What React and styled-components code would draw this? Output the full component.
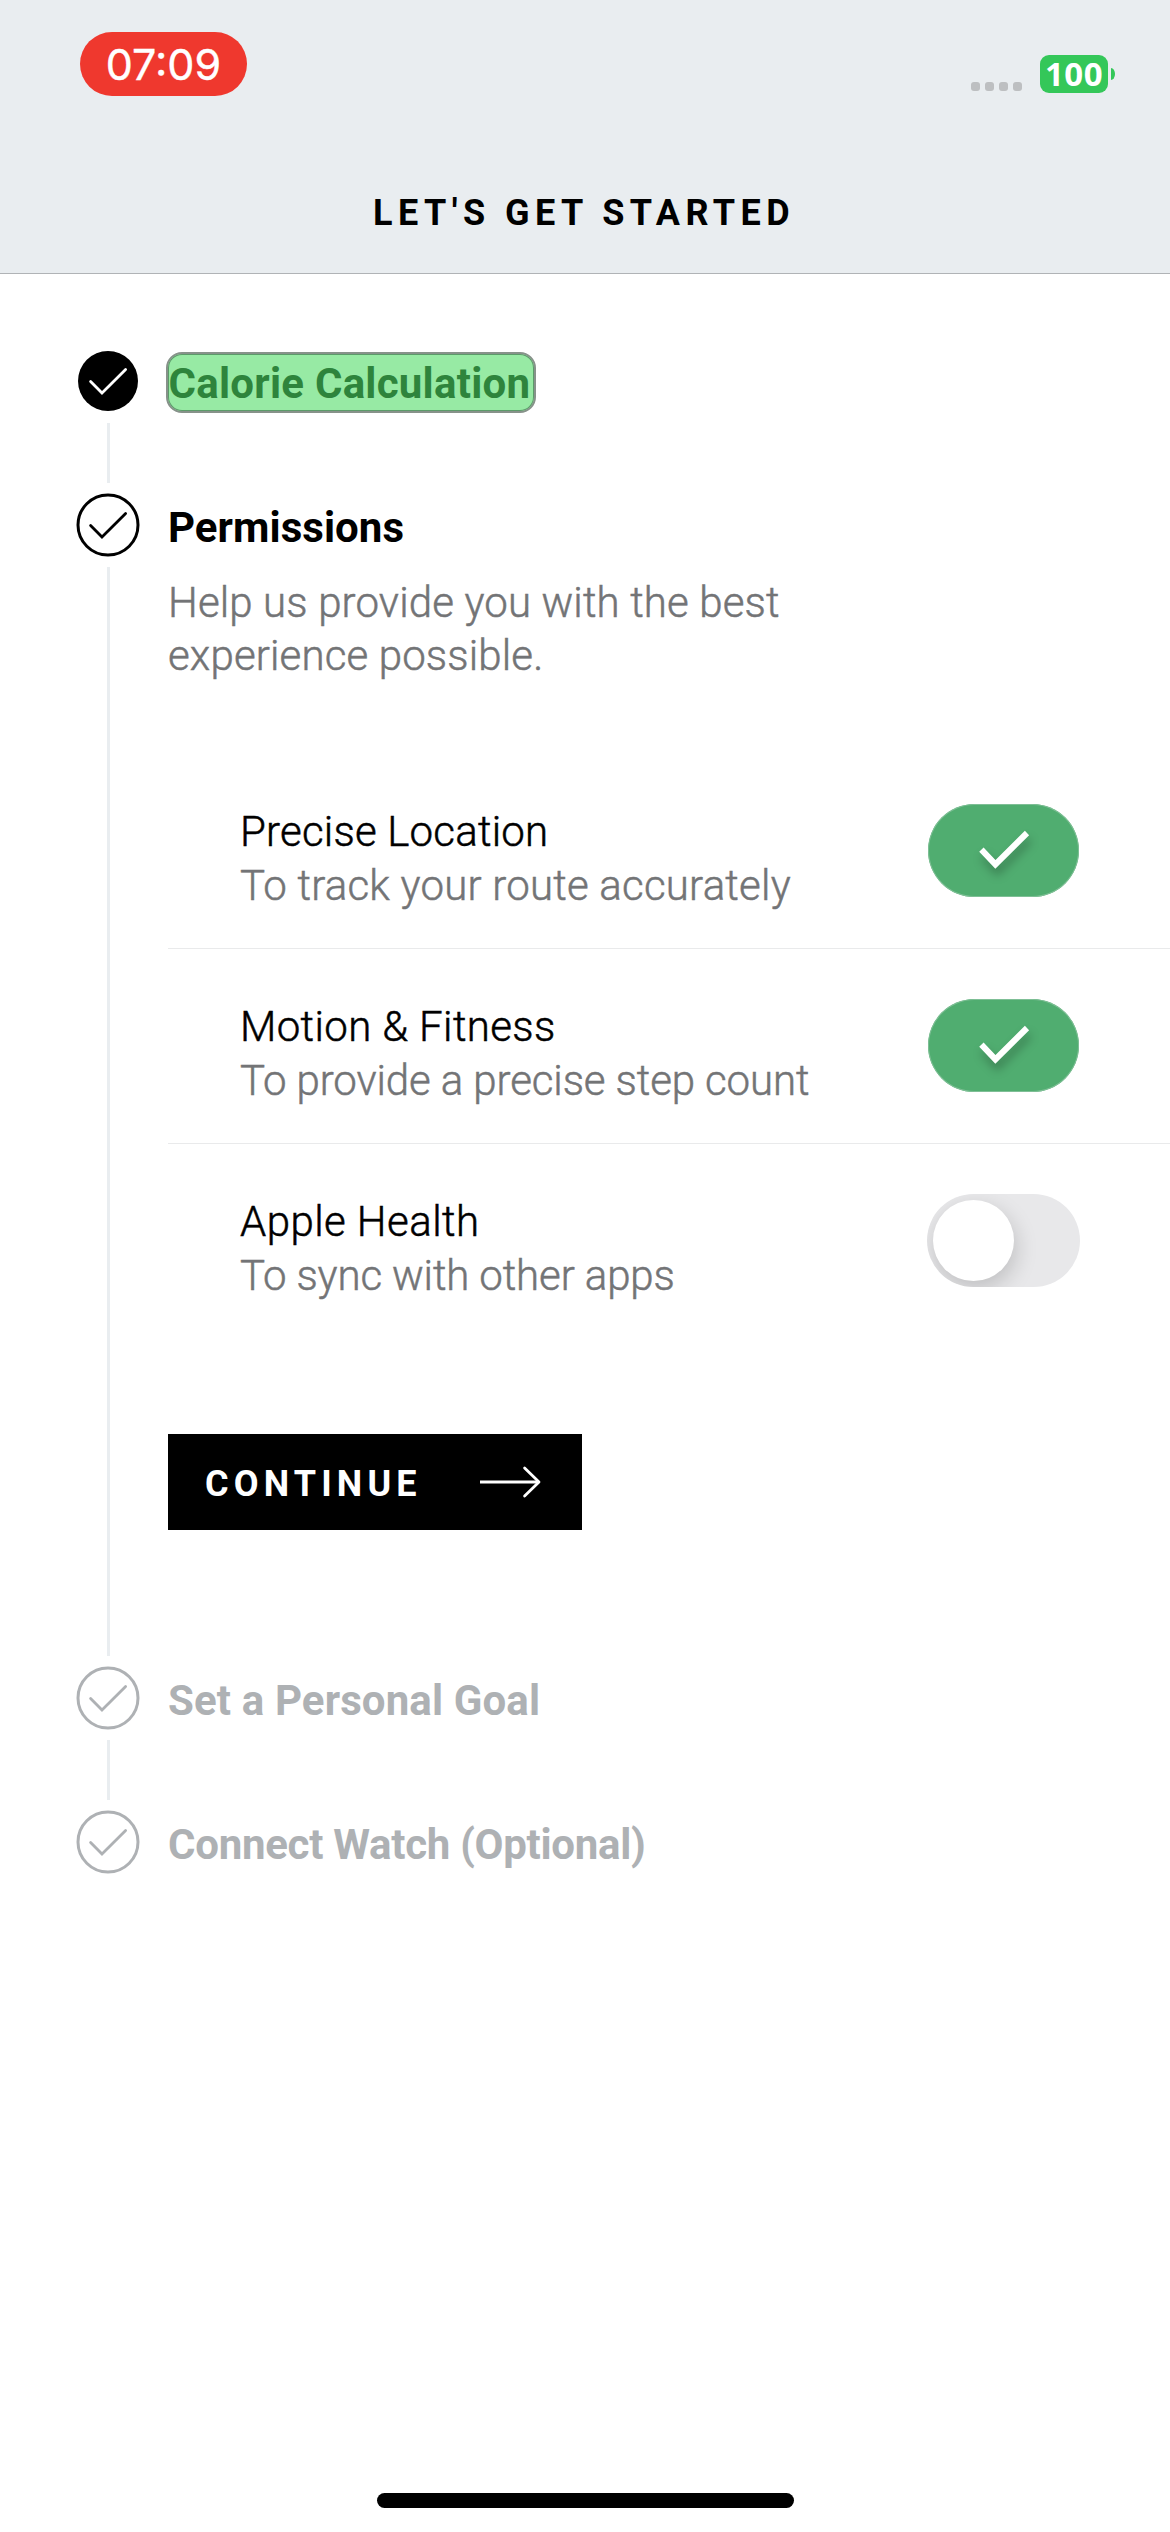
import React from "react";
import styled, { createGlobalStyle, css } from "styled-components";

const GlobalStyle = createGlobalStyle`
  *, *::before, *::after { box-sizing: border-box; }
  body { margin: 0; background: #fff; }
`;

const Screen = styled.div`
  display: flex;
  flex-direction: column;
  width: 1170px;
  height: 2532px;
  overflow: hidden;
  background: #fff;
  color: #000;
  font-family: Roboto, "Liberation Sans", sans-serif;
`;

const Header = styled.header`
  display: flex;
  flex-direction: column;
  height: 274px;
  flex: none;
  background: #e9edf0;
  border-bottom: 1px solid #b0b3b6;
`;

const StatusBar = styled.div`
  display: flex;
  align-items: flex-start;
  justify-content: space-between;
  height: 150px;
  padding: 32px 55px 0 80px;
`;

const TimePill = styled.div`
  display: flex;
  align-items: center;
  justify-content: center;
  width: 167px;
  height: 64px;
  border-radius: 32px;
  background: #ef382e;
  color: #fff;
  font: 400 43px/64px Inter, sans-serif;
  -webkit-text-stroke: 0.4px currentColor;
`;

const StatusIcons = styled.div`
  display: flex;
  align-items: flex-start;
`;

const SignalDots = styled.div`
  display: flex;
  gap: 5px;
  margin: 50px 18px 0 0;
`;

const Dot = styled.span`
  width: 9px;
  height: 9px;
  border-radius: 3px;
  background: #bdbfc1;
`;

const Battery = styled.div`
  width: 68px;
  height: 38px;
  margin-top: 23px;
  border-radius: 9px;
  background: #34c759;
  color: #fff;
  font: 700 33px/38px "Noto Sans", sans-serif;
  letter-spacing: 0.4px;
  text-align: center;
`;

const BatteryNub = styled.span`
  width: 4px;
  height: 12px;
  margin: 36px 0 0 3px;
  border-radius: 0 4px 4px 0 / 0 6px 6px 0;
  background: #34c759;
`;

const PageTitle = styled.h1`
  margin: 37px 0 0;
  padding-left: 373px;
  font-size: 36px;
  font-weight: 700;
  line-height: 52px;
  letter-spacing: 5.45px;
  white-space: nowrap;
`;

const Steps = styled.main`
  display: flex;
  flex-direction: column;
  padding: 75px 0 0 76px;
`;

const Step = styled.section`
  display: flex;
  min-height: 144px;
`;

const Rail = styled.div`
  display: flex;
  flex-direction: column;
  width: 64px;
  flex: none;
  margin-right: 28px;
`;

const RailLine = styled.span`
  flex: 1;
  width: 3px;
  margin: 10px 0 10px 31px;
  background: #e9edf0;
`;

const BadgeSvg = styled.svg`
  display: block;
  width: 64px;
  height: 64px;
  flex: none;
`;

const StepBody = styled.div`
  display: flex;
  flex-direction: column;
  align-items: flex-start;
  flex: 1;
`;

const StepTitle = styled.h2`
  margin: 0;
  height: 64px;
  font-size: 42px;
  font-weight: 700;
  line-height: 69px;
  letter-spacing: ${(p) => p.$spacing || 0}px;
  white-space: nowrap;
  color: ${(p) => (p.$muted ? "#aeb1b4" : "#000")};
  ${(p) =>
    p.$highlighted &&
    css`
      width: 370px;
      height: 61px;
      margin: 3px 0 0 -2px;
      border: 2px solid #87928a;
      border-radius: 16px;
      background: #97eaa4;
      box-shadow: inset 0 0 0 1px #5b9b69;
      color: #2e843c;
      line-height: 59px;
      text-indent: 0.5px;
    `}
`;

const Description = styled.p`
  margin: 19px 0 0;
  color: #737476;
  font-size: 42px;
  font-weight: 300;
  line-height: 53px;
  letter-spacing: 0.14px;
  -webkit-text-stroke: 0.5px currentColor;
`;

const PermissionList = styled.div`
  align-self: stretch;
  margin-top: 72px;
`;

const Permission = styled.div`
  display: flex;
  align-items: flex-start;
  justify-content: space-between;
  height: 195px;
  padding: 50px 90px 0 72px;
  border-bottom: 1px solid ${(p) => (p.$last ? "transparent" : "#e9eaeb")};
`;

const PermissionText = styled.div`
  padding-top: 1px;
`;

const PermissionName = styled.div`
  font-size: 42px;
  font-weight: 300;
  line-height: 54px;
  letter-spacing: ${(p) => p.$spacing}px;
  -webkit-text-stroke: 0.5px currentColor;
`;

const PermissionHint = styled(PermissionName)`
  color: #737476;
`;

const Switch = styled.div`
  display: flex;
  align-items: center;
  width: ${(p) => (p.$on ? 151 : 153)}px;
  height: 93px;
  margin-right: ${(p) => (p.$on ? 1 : 0)}px;
  padding: ${(p) => (p.$on ? 0 : "0 6px")};
  justify-content: ${(p) => (p.$on ? "center" : "flex-start")};
  border-radius: 47px;
  overflow: hidden;
  background: ${(p) => (p.$on ? "#50ad70" : "#e8e8ea")};
  box-shadow: ${(p) => (p.$on ? "inset 0 0 0 1px #7fbf96" : "none")};
`;

const Knob = styled.span`
  width: 81px;
  height: 81px;
  border-radius: 50%;
  background: #fff;
  box-shadow: 2px 8px 22px rgba(0, 0, 0, 0.18);
`;

const SwitchCheck = styled.svg`
  display: block;
  width: 151px;
  height: 93px;
  filter: drop-shadow(2px 7px 5px rgba(0, 0, 0, 0.28));
`;

const ContinueButton = styled.button`
  display: flex;
  align-items: center;
  width: 414px;
  height: 96px;
  margin: 95px 0 136px;
  padding: 0 41px 0 37px;
  justify-content: space-between;
  border: 0;
  border-radius: 0;
  background: #000;
  color: #fff;
  font: 700 36px/52px Roboto, sans-serif;
  letter-spacing: 5.15px;
`;

const ButtonLabel = styled.span`
  padding-top: 3px;
`;

const ArrowSvg = styled.svg`
  display: block;
  width: 61px;
  height: 32px;
`;

const HomeIndicator = styled.div`
  width: 417px;
  height: 15px;
  margin: auto 0 24px 377px;
  border-radius: 8px;
  background: #000;
`;

function Badge({ state }) {
  const color = state === "upcoming" ? "#aeb1b4" : "#000";
  const done = state === "done";
  return (
    <BadgeSvg viewBox="0 0 64 64" fill="none">
      <circle
        cx="32"
        cy="32"
        r="30"
        fill={done ? "#000" : "none"}
        stroke={done ? "none" : color}
        strokeWidth="3"
      />
      <path
        d="M14.6 32.4 L26 44 L49.6 20.6"
        stroke={done ? "#fff" : color}
        strokeWidth="2.8"
        strokeLinecap="round"
      />
    </BadgeSvg>
  );
}

function Toggle({ on }) {
  return (
    <Switch $on={on} role="switch" aria-checked={on}>
      {on ? (
        <SwitchCheck viewBox="0 0 151 93" fill="none">
          <path d="M53.4 45.6 L67.4 60.4 L99 29" stroke="#fff" strokeWidth="6" />
        </SwitchCheck>
      ) : (
        <Knob />
      )}
    </Switch>
  );
}

const permissions = [
  { name: "Precise Location", nameSpacing: 0.2, hint: "To track your route accurately", hintSpacing: 0.21, on: true },
  { name: "Motion & Fitness", nameSpacing: 0.37, hint: "To provide a precise step count", hintSpacing: -0.11, on: true },
  { name: "Apple Health", nameSpacing: 0.44, hint: "To sync with other apps", hintSpacing: -0.13, on: false },
];

export default function App() {
  return (
    <Screen>
      <GlobalStyle />
      <Header>
        <StatusBar>
          <TimePill>07:09</TimePill>
          <StatusIcons>
            <SignalDots>
              <Dot />
              <Dot />
              <Dot />
              <Dot />
            </SignalDots>
            <Battery>100</Battery>
            <BatteryNub />
          </StatusIcons>
        </StatusBar>
        <PageTitle>LET'S GET STARTED</PageTitle>
      </Header>

      <Steps>
        <Step>
          <Rail>
            <Badge state="done" />
            <RailLine />
          </Rail>
          <StepBody>
            <StepTitle $highlighted $spacing={0.25}>Calorie Calculation</StepTitle>
          </StepBody>
        </Step>

        <Step>
          <Rail>
            <Badge state="current" />
            <RailLine />
          </Rail>
          <StepBody>
            <StepTitle $spacing={0.06}>Permissions</StepTitle>
            <Description>
              Help us provide you with the best
              <br />
              experience possible.
            </Description>
            <PermissionList>
              {permissions.map((p, i) => (
                <Permission key={p.name} $last={i === permissions.length - 1}>
                  <PermissionText>
                    <PermissionName $spacing={p.nameSpacing}>{p.name}</PermissionName>
                    <PermissionHint $spacing={p.hintSpacing}>{p.hint}</PermissionHint>
                  </PermissionText>
                  <Toggle on={p.on} />
                </Permission>
              ))}
            </PermissionList>
            <ContinueButton>
              <ButtonLabel>CONTINUE</ButtonLabel>
              <ArrowSvg viewBox="0 0 61 32" fill="none" stroke="#fff" strokeWidth="2.8">
                <path d="M0 16 H59" />
                <path d="M44.6 2 L59 16 L44.6 30" strokeLinecap="round" strokeLinejoin="round" />
              </ArrowSvg>
            </ContinueButton>
          </StepBody>
        </Step>

        <Step>
          <Rail>
            <Badge state="upcoming" />
            <RailLine />
          </Rail>
          <StepBody>
            <StepTitle $muted $spacing={0.13}>Set a Personal Goal</StepTitle>
          </StepBody>
        </Step>

        <Step>
          <Rail>
            <Badge state="upcoming" />
          </Rail>
          <StepBody>
            <StepTitle $muted $spacing={-0.28}>Connect Watch (Optional)</StepTitle>
          </StepBody>
        </Step>
      </Steps>

      <HomeIndicator />
    </Screen>
  );
}
